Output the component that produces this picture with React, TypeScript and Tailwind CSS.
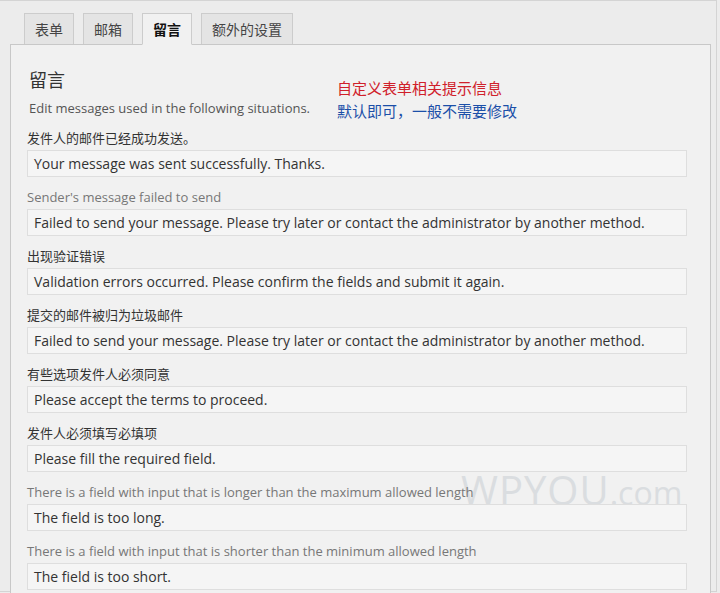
import React from 'react';

// --- tab strip + message settings panel ---

const tabs = [
    { label: '表单', active: false },
    { label: '邮箱', active: false },
    { label: '留言', active: true },
    { label: '额外的设置', active: false },
];

const messages: { label: string; value: string; muted?: boolean }[] = [
    { label: '发件人的邮件已经成功发送。', value: 'Your message was sent successfully. Thanks.' },
    { label: "Sender's message failed to send", value: 'Failed to send your message. Please try later or contact the administrator by another method.', muted: true },
    { label: '出现验证错误', value: 'Validation errors occurred. Please confirm the fields and submit it again.' },
    { label: '提交的邮件被归为垃圾邮件', value: 'Failed to send your message. Please try later or contact the administrator by another method.' },
    { label: '有些选项发件人必须同意', value: 'Please accept the terms to proceed.' },
    { label: '发件人必须填写必填项', value: 'Please fill the required field.' },
    { label: 'There is a field with input that is longer than the maximum allowed length', value: 'The field is too long.', muted: true },
    { label: 'There is a field with input that is shorter than the minimum allowed length', value: 'The field is too short.', muted: true },
];

const FONT = "font-['Open_Sans','Noto_Sans_CJK_SC',sans-serif]";

const MessageRow: React.FC<{ label: string; value: string; muted?: boolean }> = ({ label, value, muted }) => (
    <div className="flex flex-col">
        <label className={`h-[20px] overflow-visible whitespace-nowrap text-[13px] leading-[20px] ${muted ? 'text-[#777]' : 'text-[#333]'}`}>
            {label}
        </label>
        <div className="mt-[2px] h-[27px] w-[660px] border border-[#dedede] bg-[#f5f5f5] px-[6px] text-[14px] leading-[25px] text-[#333] whitespace-nowrap overflow-hidden">
            {value}
        </div>
    </div>
);

const App: React.FC = () => {
    return (
        <div className={`h-[593px] w-[720px] overflow-hidden bg-[#ececec] ${FONT}`}>
            <div className="h-[592px] w-[717px] border-t border-r border-b border-[#d4d4d4] pr-[4px]">
                {/* Tabs */}
                <div className="flex h-[43px] items-end gap-[9px] pl-[24px]">
                    {tabs.map(t => (
                        <div
                            key={t.label}
                            className={`relative -mb-px flex h-[32px] items-center border border-[#cccccc] px-[10px] text-[14px] ${
                                t.active
                                    ? 'z-10 border-b-[#f1f1f1] bg-[#f1f1f1] font-bold text-[#111]'
                                    : 'bg-[#e4e4e4] text-[#444]'
                            }`}
                        >
                            {t.label}
                        </div>
                    ))}
                </div>

                {/* Panel */}
                <div className="relative ml-[10px] h-[560px] w-[701px] border border-[#c8c8c8] bg-[#f1f1f1] pl-[16px] pt-[22px]">
                    {/* Watermark sits behind the fields */}
                    <div className="pointer-events-none absolute left-[450px] top-[424px] flex items-baseline text-[#dadde0]">
                        <span className="text-[40px] leading-[42px] tracking-[1px]">WPYOU</span>
                        <span className="text-[32px] leading-[42px]">.com</span>
                    </div>

                    <div className="relative flex">
                        <div className="w-[310px] pl-[2px]">
                            <h2 className="text-[18px] leading-[26px] text-[#333]">留言</h2>
                            <p className="mt-[6px] text-[13px] leading-[18px] text-[#555]">
                                Edit messages used in the following situations.
                            </p>
                        </div>
                        <div className="pt-[10px] text-[15px] leading-[23px]">
                            <div className="text-[#d0202a]">自定义表单相关提示信息</div>
                            <div className="text-[#1b4fa8]">默认即可，一般不需要修改</div>
                        </div>
                    </div>

                    <div className="relative mt-[5px] flex flex-col gap-[10px]">
                        {messages.map((m, i) => (
                            <MessageRow key={i} {...m} />
                        ))}
                    </div>
                </div>
            </div>
        </div>
    );
};

export default App;
